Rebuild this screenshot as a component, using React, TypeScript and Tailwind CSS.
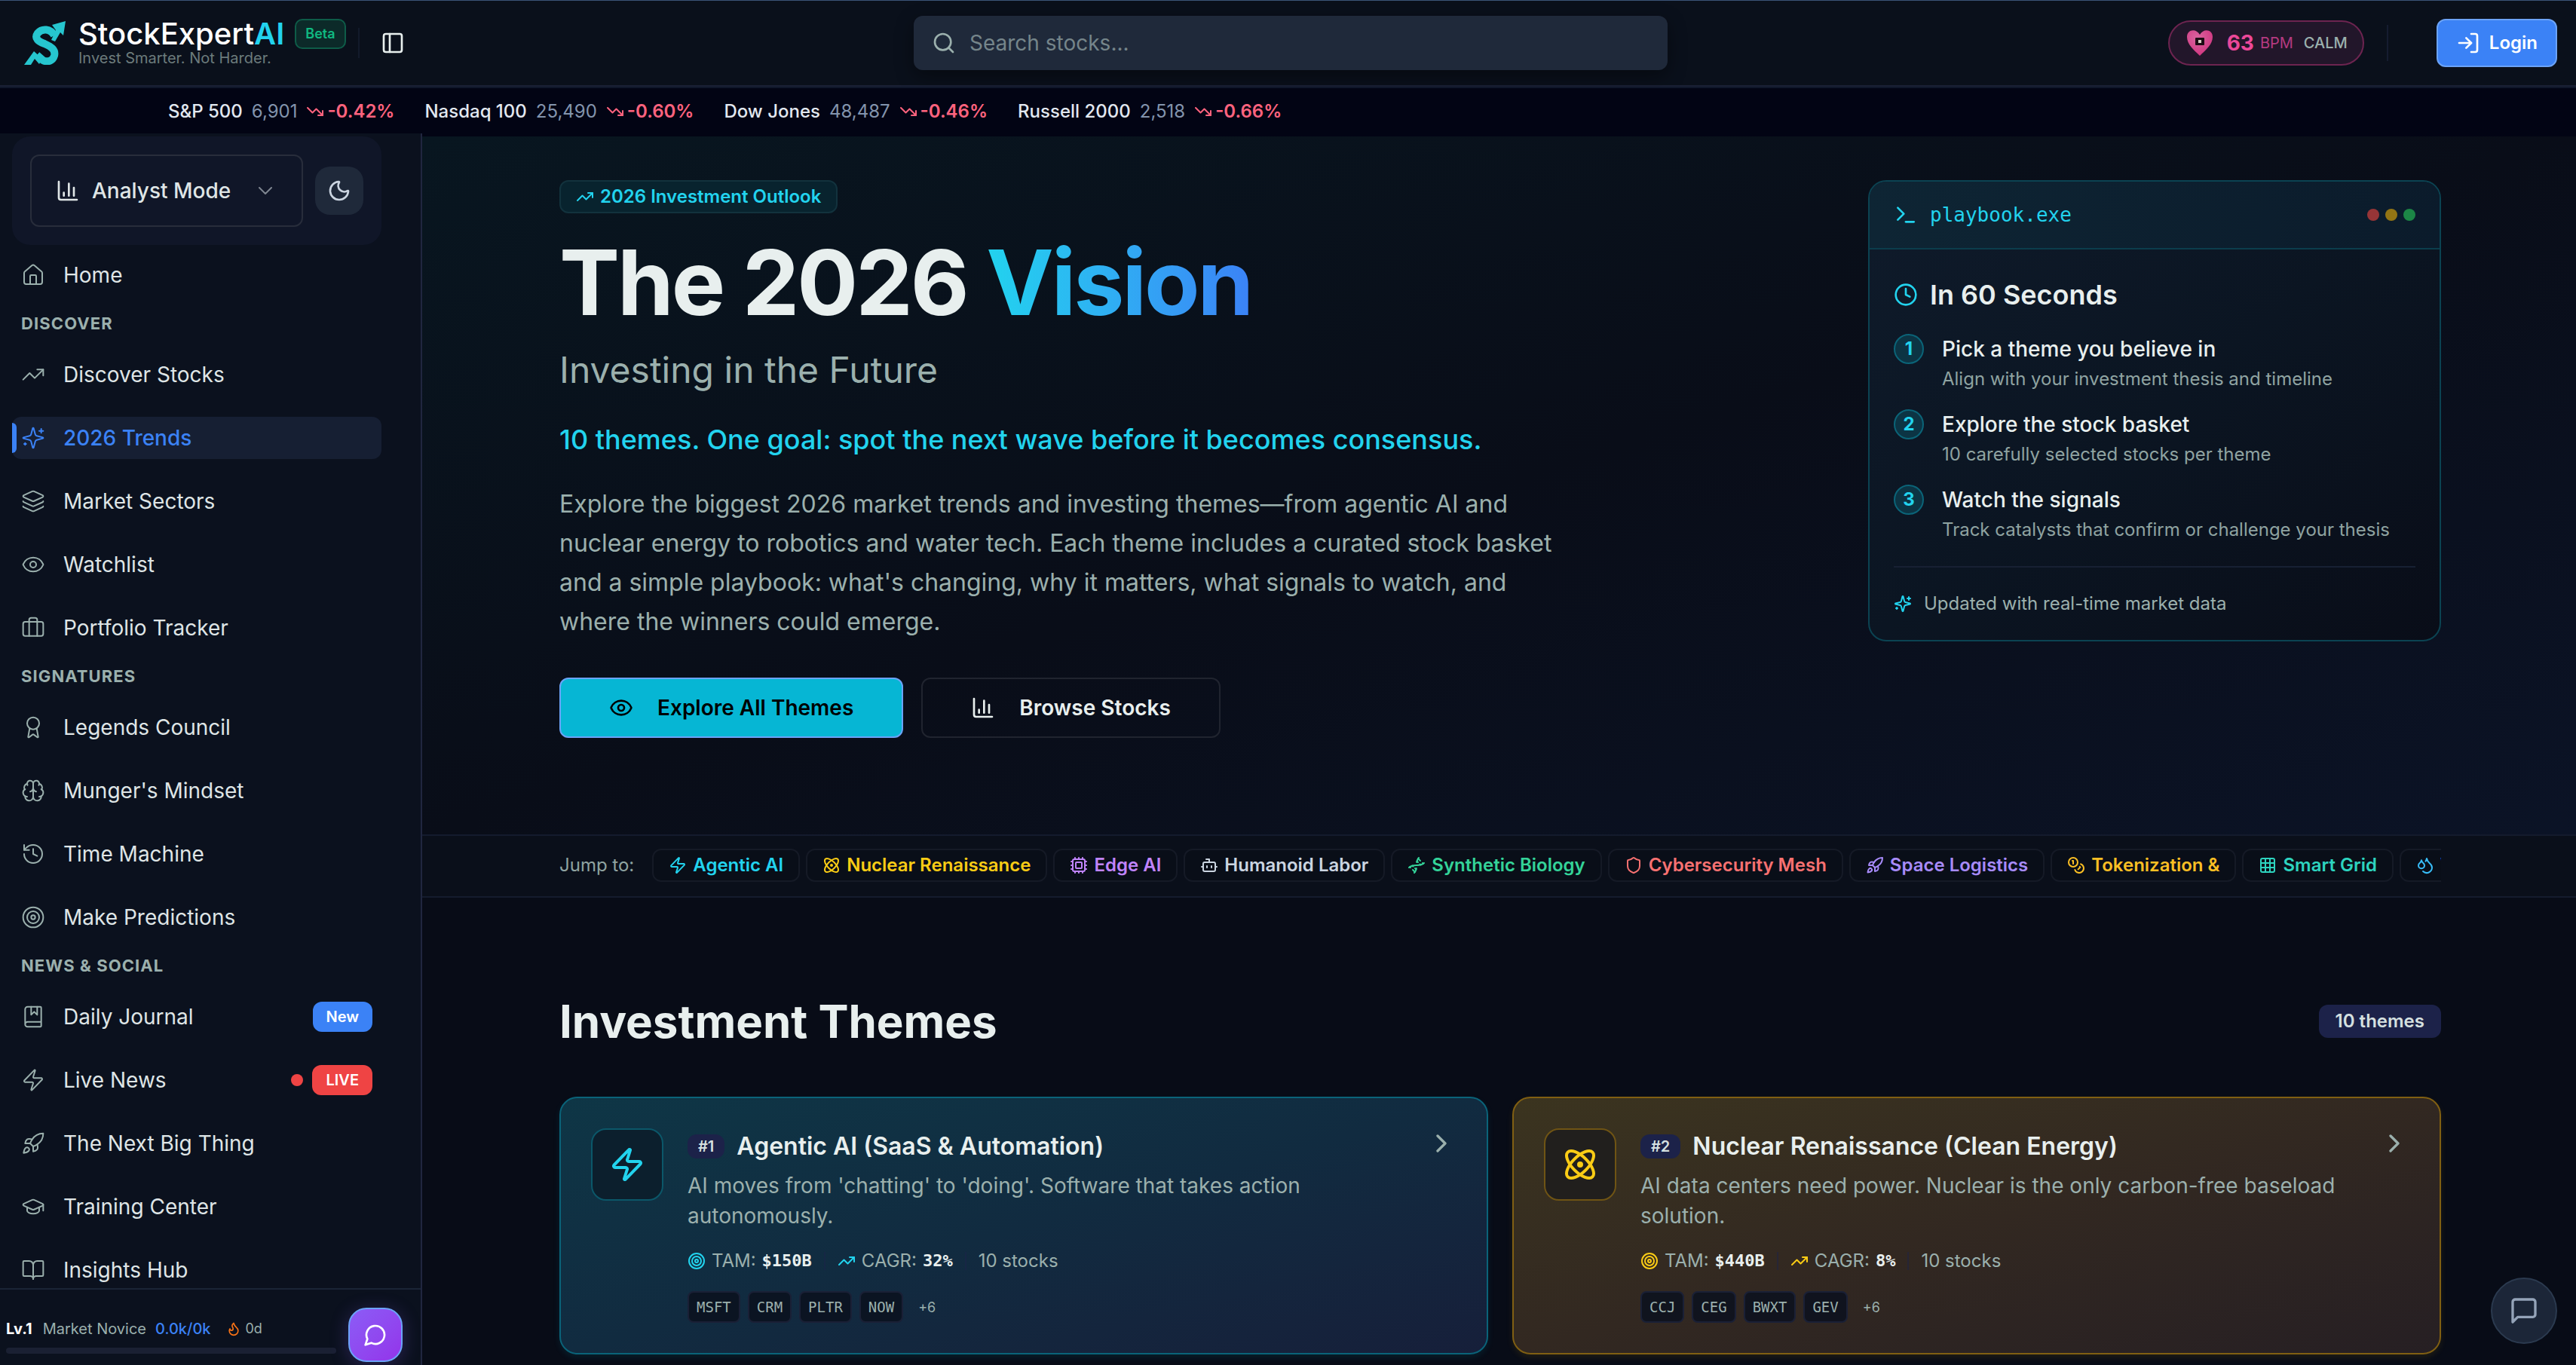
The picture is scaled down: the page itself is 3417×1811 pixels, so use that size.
import {
  Atom,
  Award,
  BookMarked,
  BookOpen,
  Bot,
  Brain,
  ChevronDown,
  ChevronRight,
  Clock,
  Coins,
  Cpu,
  Dna,
  Droplets,
  Eye,
  Flame,
  GraduationCap,
  Grid3x3,
  History,
  House,
  Layers,
  LogIn,
  Moon,
  PanelLeft,
  Rocket,
  Search,
  Shield,
  Target,
  Terminal,
  TrendingDown,
  TrendingUp,
  Zap,
} from "lucide-react";
import type { ComponentType, ReactNode } from "react";

type IconProps = { className?: string; strokeWidth?: number | string };

type NavItem = {
  label: string;
  icon: ComponentType<IconProps>;
  active?: boolean;
  badge?: "New" | "LIVE";
};

function StrokeIcon({
  className,
  strokeWidth = 2,
  children,
}: IconProps & { children: ReactNode }) {
  return (
    <svg
      viewBox="0 0 24 24"
      fill="none"
      stroke="currentColor"
      strokeWidth={strokeWidth}
      strokeLinecap="round"
      strokeLinejoin="round"
      className={className}
    >
      {children}
    </svg>
  );
}

function BriefcaseIcon(props: IconProps) {
  return (
    <StrokeIcon {...props}>
      <path d="M16 20V4a2 2 0 0 0-2-2h-4a2 2 0 0 0-2 2v16" />
      <rect width="20" height="14" x="2" y="6" rx="2" />
    </StrokeIcon>
  );
}

function SparklesIcon(props: IconProps) {
  return (
    <StrokeIcon {...props}>
      <path d="M9.937 15.5A2 2 0 0 0 8.5 14.063l-6.135-1.582a.5.5 0 0 1 0-.962L8.5 9.936A2 2 0 0 0 9.937 8.5l1.582-6.135a.5.5 0 0 1 .963 0L14.063 8.5A2 2 0 0 0 15.5 9.937l6.135 1.581a.5.5 0 0 1 0 .964L15.5 14.063a2 2 0 0 0-1.437 1.437l-1.582 6.135a.5.5 0 0 1-.963 0z" />
      <path d="M20 3v4" />
      <path d="M22 5h-4" />
      <path d="M4 17v2" />
      <path d="M5 18H3" />
    </StrokeIcon>
  );
}

function ChartIcon(props: IconProps) {
  return (
    <StrokeIcon {...props}>
      <path d="M3 3v16a2 2 0 0 0 2 2h16" />
      <path d="M18 17V9" />
      <path d="M13 17V5" />
      <path d="M8 17v-3" />
    </StrokeIcon>
  );
}

function ChatCircleIcon(props: IconProps) {
  return (
    <StrokeIcon {...props}>
      <path d="M7.9 20A9 9 0 1 0 4 16.1L2 22Z" />
    </StrokeIcon>
  );
}

function ChatSquareIcon(props: IconProps) {
  return (
    <StrokeIcon {...props}>
      <path d="M21 15a2 2 0 0 1-2 2H7l-4 4V5a2 2 0 0 1 2-2h14a2 2 0 0 1 2 2z" />
    </StrokeIcon>
  );
}

const navGroups: { title?: string; items: NavItem[] }[] = [
  { items: [{ label: "Home", icon: House }] },
  {
    title: "Discover",
    items: [
      { label: "Discover Stocks", icon: TrendingUp },
      { label: "2026 Trends", icon: SparklesIcon, active: true },
      { label: "Market Sectors", icon: Layers },
      { label: "Watchlist", icon: Eye },
      { label: "Portfolio Tracker", icon: BriefcaseIcon },
    ],
  },
  {
    title: "Signatures",
    items: [
      { label: "Legends Council", icon: Award },
      { label: "Munger's Mindset", icon: Brain },
      { label: "Time Machine", icon: History },
      { label: "Make Predictions", icon: Target },
    ],
  },
  {
    title: "News & Social",
    items: [
      { label: "Daily Journal", icon: BookMarked, badge: "New" },
      { label: "Live News", icon: Zap, badge: "LIVE" },
      { label: "The Next Big Thing", icon: Rocket },
      { label: "Training Center", icon: GraduationCap },
      { label: "Insights Hub", icon: BookOpen },
    ],
  },
];

const indices = [
  { name: "S&P 500", value: "6,901", change: "-0.42%" },
  { name: "Nasdaq 100", value: "25,490", change: "-0.60%" },
  { name: "Dow Jones", value: "48,487", change: "-0.46%" },
  { name: "Russell 2000", value: "2,518", change: "-0.66%" },
];

const steps = [
  {
    title: "Pick a theme you believe in",
    text: "Align with your investment thesis and timeline",
  },
  {
    title: "Explore the stock basket",
    text: "10 carefully selected stocks per theme",
  },
  {
    title: "Watch the signals",
    text: "Track catalysts that confirm or challenge your thesis",
  },
];

const jumps = [
  { label: "Agentic AI", icon: Zap, color: "text-[#22d3ee]" },
  { label: "Nuclear Renaissance", icon: Atom, color: "text-[#facc15]" },
  { label: "Edge AI", icon: Cpu, color: "text-[#c084fc]" },
  { label: "Humanoid Labor", icon: Bot, color: "text-[#cbd5e1]" },
  { label: "Synthetic Biology", icon: Dna, color: "text-[#34d399]" },
  { label: "Cybersecurity Mesh", icon: Shield, color: "text-[#f87171]" },
  { label: "Space Logistics", icon: Rocket, color: "text-[#a78bfa]" },
  { label: "Tokenization &", icon: Coins, color: "text-[#fbbf24]" },
  { label: "Smart Grid", icon: Grid3x3, color: "text-[#2dd4bf]" },
  { label: "Water", icon: Droplets, color: "text-[#38bdf8]" },
];

const themes = [
  {
    rank: "#1",
    title: "Agentic AI (SaaS & Automation)",
    text: "AI moves from 'chatting' to 'doing'. Software that takes action autonomously.",
    tam: "$150B",
    cagr: "32%",
    tickers: ["MSFT", "CRM", "PLTR", "NOW"],
    icon: Zap,
    accent: "text-[#22d3ee]",
    card: "border-[#0a6379] from-[#0e3646] via-[#112b40] to-[#161f3a] shadow-[0_4px_8px_#06b6d41a]",
    box: "border-[#0b5769] bg-[#0c1f2d]",
  },
  {
    rank: "#2",
    title: "Nuclear Renaissance (Clean Energy)",
    text: "AI data centers need power. Nuclear is the only carbon-free baseload solution.",
    tam: "$440B",
    cagr: "8%",
    tickers: ["CCJ", "CEG", "BWXT", "GEV"],
    icon: Atom,
    accent: "text-[#facc15]",
    card: "border-[#805f12] from-[#3b341f] via-[#322821] to-[#261f23] shadow-[0_4px_8px_#eab3081a]",
    box: "border-[#6f5414] bg-[#211f1d]",
  },
];

function Logo() {
  return (
    <svg viewBox="0 0 56 58" className="h-[58px] w-14" fill="none">
      <path
        d="M40 19C35 10 24 9 18 16C13 23 19 27 27 30C36 34 42 38 40 46C38 53 31 55 25 52L17 45"
        stroke="#26c6cf"
        strokeWidth="10"
      />
      <path d="M36 25L42 12L37 5L55 0L52 19L48 15L41 27Z" fill="#26c6cf" />
      <path d="M0 58L13 40L24 50L20 57L14 50L9 58Z" fill="#26c6cf" />
    </svg>
  );
}

function HeartPulse() {
  return (
    <svg viewBox="0 0 40 40" className="size-10">
      <defs>
        <radialGradient id="heart" cx="0.4" cy="0.3" r="0.8">
          <stop offset="0" stopColor="#d9649f" />
          <stop offset="1" stopColor="#d0307c" />
        </radialGradient>
      </defs>
      <path
        d="M20 37C12 29 3 22 3 12C3 2 15 0 20 9C25 0 37 2 37 12C37 22 28 29 20 37Z"
        fill="url(#heart)"
      />
      <rect x="14" y="13" width="12" height="10" rx="1" fill="#1d0c14" />
      <rect x="18" y="16" width="4" height="4" fill="#d8d0c4" />
    </svg>
  );
}

function Header() {
  return (
    <header className="flex h-[115px] shrink-0 items-center justify-between border-t border-b-2 border-t-[#3b5478] border-b-[#1a2035] bg-[#0a101b] pr-[25px] pl-8">
      <div className="flex flex-1 items-center">
        <a href="#" className="flex items-center gap-4">
          <Logo />
          <div>
            <div className="flex h-10 items-center gap-3.5">
              <span className="text-[40px] leading-10 font-medium text-white">
                StockExpert
                <span className="font-semibold text-[#22d3ee]">AI</span>
              </span>
              <span className="rounded-[10px] border-2 border-[#0e5c48] bg-[#0c2a29] px-3 text-[18px] leading-9 font-semibold text-[#10b981]">
                Beta
              </span>
            </div>
            <p className="text-[20px] leading-6 text-[#6c7b7b]">
              Invest Smarter. Not Harder.
            </p>
          </div>
        </a>
        <span className="ml-4 h-10 w-0.5 bg-[#121a2b]" />
        <button
          type="button"
          aria-label="Toggle sidebar"
          className="ml-7 text-[#e8efee]"
        >
          <PanelLeft className="size-8" />
        </button>
      </div>
      <label className="flex h-[72px] w-[1000px] items-center gap-[18px] rounded-xl bg-[#1f293a] px-6 shadow-[0_8px_24px_#00000066]">
        <Search className="size-8 text-[#9bb0ad]" />
        <input
          type="text"
          aria-label="Search stocks"
          placeholder="Search stocks..."
          className="flex-1 bg-transparent text-[28px] text-[#e8efee] outline-none placeholder:text-[#75858a]"
        />
      </label>
      <div className="flex flex-1 items-center justify-end">
        <div className="flex h-[60px] items-center rounded-full border-2 border-[#6d2450] bg-[#22162a] px-5">
          <HeartPulse />
          <span className="ml-4 text-[28px] font-bold text-[#ec4899]">63</span>
          <span className="ml-2 text-[20px] text-[#b53a80]">BPM</span>
          <span className="ml-3.5 text-[20px] font-medium text-[#9bb0ad]">
            CALM
          </span>
        </div>
        <span className="ml-[30px] h-12 w-0.5 bg-[#151c30]" />
        <button
          type="button"
          className="ml-16 flex h-16 items-center gap-3 rounded-xl border-2 border-[#6ba3f7] bg-[#3b82f6] px-6 text-[24px] font-semibold text-white"
        >
          <LogIn className="size-8" />
          Login
        </button>
      </div>
    </header>
  );
}

function IndexTicker() {
  return (
    <div className="flex h-[62px] shrink-0 items-center gap-10 border-t-2 border-[#0f172a] bg-[#020414] pt-0.5 pl-[223px] text-[24px]">
      {indices.map((item) => (
        <div key={item.name} className="flex items-center gap-3">
          <span className="font-medium text-[#e2e8f0]">{item.name}</span>
          <span className="text-[#8394ad]">{item.value}</span>
          <span className="flex items-center gap-1 font-semibold text-[#ff637e]">
            <TrendingDown className="size-6" />
            {item.change}
          </span>
        </div>
      ))}
    </div>
  );
}

function NavLink({ item }: { item: NavItem }) {
  const Icon = item.icon;
  return (
    <a
      href="#"
      className={
        item.active
          ? "relative flex h-14 items-center gap-6 rounded-xl bg-[#161f33] px-3 text-[28px] font-medium text-[#3b82f6]"
          : "flex h-14 items-center gap-6 px-3 text-[28px] text-[#dfe5e6]"
      }
    >
      {item.active && (
        <span className="absolute top-2 left-0 h-10 w-1.5 rounded-r-md bg-[#3b82f6]" />
      )}
      <Icon
        className={item.active ? "size-8" : "size-8 text-[#9bb0ad]"}
        strokeWidth={1.5}
      />
      {item.label}
      {item.badge === "New" && (
        <span className="ml-auto rounded-xl bg-[#3b82f6] px-[18px] text-[20px] leading-10 font-semibold text-white">
          New
        </span>
      )}
      {item.badge === "LIVE" && (
        <span className="ml-auto flex items-center gap-3">
          <span className="size-4 rounded-full bg-[#ef4444]" />
          <span className="rounded-xl bg-[#ef4444] px-[18px] text-[20px] leading-10 font-semibold text-white">
            LIVE
          </span>
        </span>
      )}
    </a>
  );
}

function Sidebar() {
  return (
    <aside className="flex w-[560px] shrink-0 flex-col border-r-2 border-[#20263f] bg-[#0b111e]">
      <div className="min-h-0 flex-1 overflow-hidden pt-1 pr-[52px] pl-4">
        <div className="flex items-center gap-4 rounded-3xl bg-[#101628] p-6">
          <label className="flex h-24 flex-1 items-center gap-4 rounded-xl border-2 border-[#282d3b] px-8 text-[#dfe5e6]">
            <ChartIcon className="size-8" />
            <select
              aria-label="Mode"
              className="min-w-0 flex-1 appearance-none bg-transparent text-[28px] font-medium outline-none"
            >
              <option>Analyst Mode</option>
            </select>
            <ChevronDown className="size-8 text-[#7e8590]" strokeWidth={1.5} />
          </label>
          <button
            type="button"
            aria-label="Toggle theme"
            className="flex size-16 items-center justify-center rounded-[20px] bg-[#1f293a] text-[#cbd5e1]"
          >
            <Moon className="size-8" />
          </button>
        </div>
        <nav className="mt-3">
          {navGroups.map((group, index) => (
            <div key={index}>
              {group.title && (
                <h2 className="mt-5 mb-6 pl-3 text-[22px] leading-8 font-bold tracking-wider text-[#9bb0ad] uppercase">
                  {group.title}
                </h2>
              )}
              <div className="flex flex-col gap-7">
                {group.items.map((item) => (
                  <NavLink key={item.label} item={item} />
                ))}
              </div>
            </div>
          ))}
        </nav>
      </div>
      <div className="flex h-[102px] shrink-0 items-start gap-4 border-t-2 border-[#1a2436] pr-6 pl-2">
        <div className="flex-1 pt-9">
          <div className="flex items-center text-[20px] leading-8">
            <span className="font-bold text-white">Lv.1</span>
            <span className="ml-3.5 text-[#9bb0ad]">Market Novice</span>
            <span className="ml-3 font-medium text-[#3b82f6]">0.0k/0k</span>
            <Flame className="ml-5 size-5 text-[#f97316]" />
            <span className="ml-1.5 text-[18px] text-[#9bb0ad]">0d</span>
          </div>
          <div className="mt-[9px] h-2 rounded-full bg-[#1a2033]" />
        </div>
        <button
          type="button"
          aria-label="Open chat"
          className="mt-6 flex size-[72px] items-center justify-center rounded-3xl border-2 border-[#6ba3f7] bg-linear-to-br from-[#8b5cf6] to-[#9333ea] text-white shadow-[0_4px_24px_#8b5cf640]"
        >
          <ChatCircleIcon className="size-8" />
        </button>
      </div>
    </aside>
  );
}

function Playbook() {
  return (
    <section className="w-[760px] shrink-0 overflow-hidden rounded-3xl border-2 border-[#0b4352] bg-linear-to-br from-[#0f1b2b] via-[#0b1522] to-[#090d18]">
      <div className="flex h-[90px] items-center gap-4 border-b-2 border-[#0b3d4c] bg-linear-to-r from-[#0e2534] to-[#0b1b2b] px-8 text-[#22d3ee]">
        <Terminal className="size-8" />
        <span className="font-['DejaVu_Sans_Mono',monospace] text-[26px]">
          playbook.exe
        </span>
        <div className="ml-auto flex gap-2">
          <span className="size-4 rounded-full bg-[#973537]" />
          <span className="size-4 rounded-full bg-[#937514]" />
          <span className="size-4 rounded-full bg-[#1c8646]" />
        </div>
      </div>
      <div className="p-8">
        <h2 className="flex items-center gap-4 text-[36px] leading-[56px] font-semibold text-[#e8efee]">
          <Clock className="size-8 text-[#22d3ee]" />
          In 60 Seconds
        </h2>
        <ol className="mt-6 flex flex-col gap-5">
          {steps.map((step, index) => (
            <li key={step.title} className="flex gap-6">
              <span className="flex size-10 items-center justify-center rounded-full border-2 border-[#0b6478] bg-[#0c3444] text-[24px] font-bold text-[#22d3ee]">
                {index + 1}
              </span>
              <div>
                <h3 className="text-[28px] leading-10 font-medium text-[#e8efee]">
                  {step.title}
                </h3>
                <p className="text-[24px] leading-10 text-[#8fa3a1]">
                  {step.text}
                </p>
              </div>
            </li>
          ))}
        </ol>
        <p className="mt-7 flex items-center gap-4 border-t-2 border-[#172033] pt-8 text-[24px] leading-8 text-[#9bb0ad]">
          <SparklesIcon className="size-6 text-[#22d3ee]" />
          Updated with real-time market data
        </p>
      </div>
    </section>
  );
}

function Hero() {
  return (
    <section className="bg-linear-to-br from-[#081620] via-[#090d18] to-[#0b1326]">
      <div className="mx-auto flex max-w-[2563px] items-start justify-between pt-[58px] pr-8 pb-32 pl-[35px]">
        <div>
          <span className="inline-flex h-11 items-center gap-2 rounded-xl border-2 border-[#12323d] bg-[#08232e] px-5 text-[24px] font-semibold text-[#22d3ee]">
            <TrendingUp className="size-6" />
            2026 Investment Outlook
          </span>
          <h1 className="mt-8 text-[120px] leading-[120px] font-bold tracking-tight text-[#e8efee]">
            The 2026{" "}
            <span className="bg-linear-to-r from-[#22d3ee] to-[#3b82f6] bg-clip-text text-transparent">
              Vision
            </span>
          </h1>
          <p className="mt-6 text-[48px] leading-[64px] text-[#9bb0ad]">
            Investing in the Future
          </p>
          <p className="mt-8 text-[36px] leading-[56px] font-medium text-[#22d3ee]">
            10 themes. One goal: spot the next wave before it becomes consensus.
          </p>
          <p className="mt-8 max-w-[1344px] text-[32px] leading-[52px] text-[#9bb0ad]">
            Explore the biggest 2026 market trends and investing themes—from
            agentic AI and nuclear energy to robotics and water tech. Each theme
            includes a curated stock basket and a simple playbook: what's
            changing, why it matters, what signals to watch, and where the
            winners could emerge.
          </p>
          <div className="mt-12 flex gap-6">
            <button
              type="button"
              className="flex h-20 items-center gap-8 rounded-xl border-2 border-[#6ba3f7] bg-[#06b6d4] px-16 text-[28px] font-semibold text-black"
            >
              <Eye className="size-8" />
              Explore All Themes
            </button>
            <button
              type="button"
              className="flex h-20 items-center gap-8 rounded-xl border-2 border-[#20242f] px-16 text-[28px] font-semibold text-[#e8efee]"
            >
              <ChartIcon className="size-8" />
              Browse Stocks
            </button>
          </div>
        </div>
        <Playbook />
      </div>
    </section>
  );
}

function JumpBar() {
  return (
    <div className="border-y-2 border-[#141b2d] bg-[#0a0f1a]">
      <div className="mx-auto max-w-[2563px] pt-[17px] pr-8 pb-[19px] pl-[35px]">
        <nav className="flex items-center gap-2 overflow-hidden">
          <span className="mr-4 shrink-0 text-[24px] text-[#8fa3a1]">
            Jump to:
          </span>
          {jumps.map(({ label, icon: Icon, color }) => (
            <a
              key={label}
              href="#"
              className={`flex h-11 shrink-0 items-center gap-2 rounded-xl border-2 border-[#151a26] bg-[#090e18] px-5 text-[24px] font-semibold ${color}`}
            >
              <Icon className="size-6" />
              {label}
            </a>
          ))}
        </nav>
      </div>
    </div>
  );
}

function ThemeCard({ theme }: { theme: (typeof themes)[number] }) {
  const Icon = theme.icon;
  return (
    <a
      href="#"
      className={`flex gap-8 rounded-3xl border-2 bg-linear-to-br p-10 ${theme.card}`}
    >
      <span
        className={`flex size-24 shrink-0 items-center justify-center rounded-[20px] border-2 ${theme.box} ${theme.accent}`}
      >
        <Icon className="size-12" />
      </span>
      <div className="flex-1">
        <div className="flex h-12 items-center gap-4">
          <span className="rounded-xl bg-[#1c2249] px-3.5 text-[20px] leading-8 font-semibold text-[#d5e0e0]">
            {theme.rank}
          </span>
          <h3 className="text-[32px] font-semibold text-[#e8efee]">
            {theme.title}
          </h3>
        </div>
        <p className="mt-2 text-[28px] leading-10 text-[#9bb0ad]">
          {theme.text}
        </p>
        <div className="mt-6 flex items-center gap-4 text-[24px] leading-8 text-[#9bb0ad]">
          <span className="flex items-center gap-2">
            <Target className={`size-6 ${theme.accent}`} />
            TAM:
            <span className="font-['DejaVu_Sans_Mono',monospace] text-[22px] font-bold text-[#e8efee]">
              {theme.tam}
            </span>
          </span>
          <span className="h-6 w-0.5 bg-[#1c2249]/50" />
          <span className="flex items-center gap-2">
            <TrendingUp className={`size-6 ${theme.accent}`} />
            CAGR:
            <span className="font-['DejaVu_Sans_Mono',monospace] text-[22px] font-bold text-[#e8efee]">
              {theme.cagr}
            </span>
          </span>
          <span className="h-6 w-0.5 bg-[#1c2249]/50" />
          <span>{theme.tickers.length + 6} stocks</span>
        </div>
        <div className="mt-6 flex items-center gap-2.5">
          {theme.tickers.map((ticker) => (
            <span
              key={ticker}
              className="rounded-lg border-2 border-[#1a2036] bg-[#0a111d]/85 px-2.5 font-['DejaVu_Sans_Mono',monospace] text-[19px] leading-[38px] text-[#9bb0ad]"
            >
              {ticker}
            </span>
          ))}
          <span className="ml-2.5 text-[18px] text-[#9bb0ad]">+6</span>
        </div>
      </div>
      <ChevronRight className="size-10 shrink-0 text-[#9bb0ad]" />
    </a>
  );
}

export default function App() {
  return (
    <div className="flex h-screen flex-col overflow-hidden bg-[#080c17] font-['Inter',sans-serif]">
      <Header />
      <IndexTicker />
      <div className="flex min-h-0 flex-1">
        <Sidebar />
        <main className="min-w-0 flex-1 overflow-hidden border-t-4 border-[#020414]">
          <Hero />
          <JumpBar />
          <section className="mx-auto max-w-[2563px] pt-32 pr-8 pl-[35px]">
            <div className="flex items-center justify-between">
              <h2 className="text-[60px] leading-[72px] font-bold text-[#e8efee]">
                Investment Themes
              </h2>
              <span className="rounded-xl bg-[#1c2249] px-[22px] text-[24px] leading-[44px] font-semibold text-[#d5e0e0]">
                10 themes
              </span>
            </div>
            <div className="mt-16 grid grid-cols-2 gap-8">
              {themes.map((theme) => (
                <ThemeCard key={theme.rank} theme={theme} />
              ))}
            </div>
          </section>
        </main>
      </div>
      <button
        type="button"
        aria-label="Send feedback"
        className="fixed right-[25px] bottom-7 flex size-[88px] items-center justify-center rounded-full border-2 border-[#2b3a4f] bg-[#1c2638] text-[#94a3b8]"
      >
        <ChatSquareIcon className="size-10" />
      </button>
    </div>
  );
}
